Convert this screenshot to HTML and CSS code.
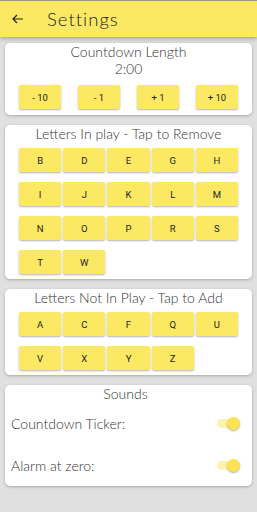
FILE: index.html
```html
<!DOCTYPE html>
<html lang="en">
<head>
  <meta charset="UTF-8" />
  <title>Settings</title>
  <link rel="stylesheet" href="styles.css">
</head>
<body>
  <!-- Top bar -->
  <div class="topbar">
    <svg class="back" viewBox="0 0 12 10" width="12" height="10">
      <path d="M11 5H1.5M5 1L1 5l4 4" fill="none" stroke="#222" stroke-width="1.2"/>
    </svg>
    <span class="topbar-title">Settings</span>
  </div>

  <div class="content">
    <!-- Countdown -->
    <div class="card countdown">
      <div class="card-title">Countdown Length</div>
      <div class="card-title">2:00</div>
      <div class="step-row">
        <button class="btn">- 10</button>
        <button class="btn">- 1</button>
        <button class="btn">+ 1</button>
        <button class="btn">+ 10</button>
      </div>
    </div>

    <!-- Letters in play -->
    <div class="card">
      <div class="card-title">Letters In play - Tap to Remove</div>
      <div class="letter-grid">
        <button class="btn">B</button>
        <button class="btn">D</button>
        <button class="btn">E</button>
        <button class="btn">G</button>
        <button class="btn">H</button>
        <button class="btn">I</button>
        <button class="btn">J</button>
        <button class="btn">K</button>
        <button class="btn">L</button>
        <button class="btn">M</button>
        <button class="btn">N</button>
        <button class="btn">O</button>
        <button class="btn">P</button>
        <button class="btn">R</button>
        <button class="btn">S</button>
        <button class="btn">T</button>
        <button class="btn">W</button>
      </div>
    </div>

    <!-- Letters not in play -->
    <div class="card">
      <div class="card-title">Letters Not In Play - Tap to Add</div>
      <div class="letter-grid">
        <button class="btn">A</button>
        <button class="btn">C</button>
        <button class="btn">F</button>
        <button class="btn">Q</button>
        <button class="btn">U</button>
        <button class="btn">V</button>
        <button class="btn">X</button>
        <button class="btn">Y</button>
        <button class="btn">Z</button>
      </div>
    </div>

    <!-- Sounds -->
    <div class="card sounds">
      <div class="card-title">Sounds</div>
      <div class="switch-row">
        <span>Countdown Ticker:</span>
        <span class="switch"><span class="knob"></span></span>
      </div>
      <div class="switch-row">
        <span>Alarm at zero:</span>
        <span class="switch"><span class="knob"></span></span>
      </div>
    </div>
  </div>
</body>
</html>
```

FILE: styles.css
```css
/* Global */
body {
  margin: 0;
  background: #e0e0e0;
  font-family: Lato, "Open Sans", sans-serif;
  font-weight: 300;
  color: #333;
}
/* Top bar */
.topbar {
  height: 37px;
  background: #fbe964;
  border-top: 1px solid #9a9a7a;
  box-sizing: border-box;
  display: flex;
  align-items: center;
  padding-left: 12px;
  box-shadow: 0 2px 4px rgba(0, 0, 0, 0.25);
}
.back {
  margin-right: 23px;
}
.topbar-title {
  font-size: 18.5px;
  letter-spacing: 1px;
  color: #222;
}
/* Cards */
.content {
  padding: 6px 5px;
}
.card {
  background: #fff;
  border-radius: 5px;
  box-shadow: 0 1px 3px rgba(0, 0, 0, 0.25);
  padding: 0 14px 5px;
  margin-bottom: 10px;
}
.countdown {
  padding-bottom: 6px;
}
.card-title {
  text-align: center;
  font-size: 14px;
  line-height: 17px;
}
.step-row {
  display: flex;
  justify-content: space-between;
  margin-top: 8px;
}
.step-row .btn {
  width: 42px;
}
.letter-grid {
  display: grid;
  grid-template-columns: repeat(5, 1fr);
  column-gap: 2px;
  row-gap: 10px;
  margin-top: 6px;
}
.btn {
  height: 24px;
  border: none;
  border-radius: 2px;
  background: #fbe964;
  font-family: Roboto, sans-serif;
  font-size: 9.5px;
  color: #222;
  box-shadow: 0 1px 2px rgba(0, 0, 0, 0.3);
  padding: 0;
}
/* Sounds */
.sounds {
  padding: 0 12px 0 6px;
}
.switch-row {
  display: flex;
  justify-content: space-between;
  align-items: center;
  font-size: 14px;
  height: 42px;
}
.switch {
  position: relative;
  width: 20px;
  height: 9px;
  border-radius: 5px;
  background: #fdf3b0;
  margin-right: 3px;
}
.knob {
  position: absolute;
  right: -3px;
  top: -2px;
  width: 13px;
  height: 13px;
  border-radius: 50%;
  background: #fbe352;
  box-shadow: 0 1px 2px rgba(0, 0, 0, 0.3);
}
```
